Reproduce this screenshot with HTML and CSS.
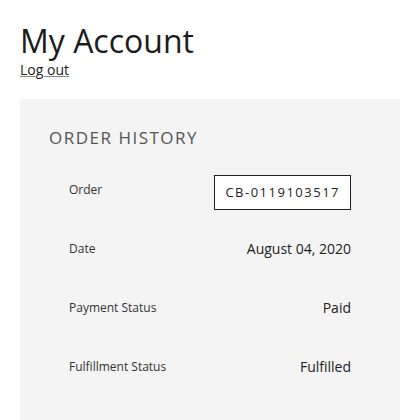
FILE: index.html
```html
<!DOCTYPE html>
<html lang="en">
<head>
    <title>My Account</title>
    <meta charset="utf-8">
    <link rel="stylesheet" href="styles.css">
</head>
<body>

<div class="account">
    <div class="accountHeader">
        <h1 class="accountTitle">My Account</h1>
        <a class="logout" href="#">Log out</a>
    </div>

    <div class="orderHistory">
        <h2 class="sectionTitle">Order History</h2>

        <div class="orderRow">
            <span class="orderLabel">Order</span>
            <a class="orderNumber" href="#">CB-0119103517</a>
        </div>
        <div class="orderRow">
            <span class="orderLabel">Date</span>
            <span class="orderValue">August 04, 2020</span>
        </div>
        <div class="orderRow">
            <span class="orderLabel">Payment Status</span>
            <span class="orderValue">Paid</span>
        </div>
        <div class="orderRow">
            <span class="orderLabel">Fulfillment Status</span>
            <span class="orderValue">Fulfilled</span>
        </div>
    </div>
</div>

</body>
</html>
```

FILE: styles.css
```css
/* Reset
---------------------------------------------------------------- */
html, body {
    margin: 0;
    padding: 0;
    }
body {
    font-family: "Open Sans", Arial, sans-serif;
    color: #222;
    background: #fff;
    }
h1, h2 {
    margin: 0;
    font-weight: normal;
    }

/* Account header
---------------------------------------------------------------- */
.account {
    padding: 22px 20px 0;
    }
.accountHeader {
    display: flex;
    flex-direction: column;
    align-items: flex-start;
    }
.accountTitle {
    font-size: 32px;
    line-height: 37px;
    color: #1c1c1c;
    }
.logout {
    margin-top: 2px;
    font-size: 14px;
    line-height: 18px;
    color: #222;
    text-decoration: underline;
    text-decoration-color: #888;
    }

/* Order history panel
---------------------------------------------------------------- */
.orderHistory {
    margin-top: 20px;
    background: #f4f4f4;
    padding: 29px 49px 40px 29px;
    }
.sectionTitle {
    font-size: 17px;
    line-height: 20px;
    letter-spacing: 1.5px;
    text-transform: uppercase;
    color: #555;
    margin-bottom: 12px;
    }
.orderRow {
    display: flex;
    justify-content: space-between;
    align-items: center;
    height: 59px;
    padding-left: 20px;
    }
.orderLabel {
    font-size: 12px;
    color: #333;
    }
.orderValue {
    font-size: 14px;
    color: #222;
    }
.orderNumber {
    display: block;
    margin-top: 6px;
    border: 1px solid #222;
    background: #fff;
    padding: 0 10px;
    height: 33px;
    line-height: 33px;
    font-size: 13px;
    letter-spacing: 1.5px;
    color: #222;
    text-decoration: none;
    }
```
